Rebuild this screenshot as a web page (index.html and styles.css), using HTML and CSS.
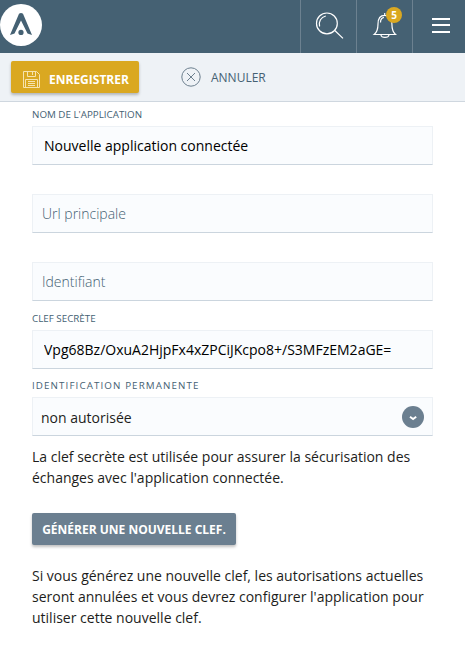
FILE: index.html
```html
<!DOCTYPE html>
<html lang="fr">
<head>
<meta charset="utf-8">
<title>Application connectée</title>
<link rel="stylesheet" href="styles.css">
</head>
<body>
<header class="topbar">
  <svg class="logo" viewBox="0 0 42 42"><circle cx="21" cy="21" r="21" fill="#fff"/><path d="M10 31L19 9.8Q21 8.4 23 9.8L32 31L27.5 29.4L21 16.5L14.5 29.4Z" fill="#456173"/><circle cx="21" cy="28.4" r="2.6" fill="#456173"/></svg>
  <nav class="actions">
    <button class="action" aria-label="Rechercher"><svg viewBox="0 0 56 53" fill="none" stroke="#fff"><circle cx="26.9" cy="23.4" r="10.4" stroke-width="1.2"/><path d="M19.6 26.5C18.4 21.5 21 17 25.8 16M34.8 30.5L43 38.4" stroke-width="1.2"/></svg></button>
    <button class="action" aria-label="Notifications"><svg viewBox="0 0 56 53" fill="none" stroke="#fff" stroke-width="1.2"><path d="M18.2 34.5C21.2 32 22 29 22 24C22 18 24.2 15.3 28.7 15.3C33.2 15.3 35.9 18 35.9 24C35.9 29 36.7 32 39.5 34.5ZM28.7 13V15.3M24.9 35C25.5 38.2 32.4 38.2 33 35M24.5 22.5C24.5 19.5 25.7 17.7 27.9 17.3"/></svg><span class="badge">5</span></button>
    <button class="action" aria-label="Menu"><svg viewBox="0 0 56 53" fill="#fff"><path d="M20 18h18v2H20zM20 24h18v2H20zM20 31h18v2H20z"/></svg></button>
  </nav>
</header>
<div class="toolbar">
  <button class="btn save"><svg viewBox="0 0 17 17" fill="none" stroke="#f6e3ae"><path d="M.5 .5H13.5L16.5 3.5V16.5H.5Z"/><path d="M4.5 .5V5.5H12.5V.5M9.5 1V4M2.5 16V8.5H14.5V16M5 10.5H12M5 12.5H12M5 14.5H12"/></svg><span class="caption">ENREGISTRER</span></button>
  <button class="cancel"><svg viewBox="0 0 20 20" fill="none" stroke="#6c7f8e"><circle cx="10" cy="10" r="9.2"/><path d="M6 6L14 14M14 6L6 14"/></svg>ANNULER</button>
</div>
<main class="form">
  <label class="label" for="nom">NOM DE L'APPLICATION</label>
  <input class="field" id="nom" value="Nouvelle application connectée">
  <input class="field empty" placeholder="Url principale">
  <input class="field empty" placeholder="Identifiant">
  <label class="label" for="clef">CLEF SECRÈTE</label>
  <input class="field" id="clef" value="Vpg68Bz/OxuA2HjpFx4xZPCiJKcpo8+/S3MFzEM2aGE=">
  <div class="label perm">IDENTIFICATION PERMANENTE</div>
  <div class="field select"><span>non autorisée</span><svg viewBox="0 0 22 22"><circle cx="11" cy="11" r="11" fill="#6b7f90"/><path d="M8 10.8L11.1 13L14.2 10.8" fill="none" stroke="#fff" stroke-width="2"/></svg></div>
  <p class="help">La clef secrète est utilisée pour assurer la sécurisation des échanges avec l'application connectée.</p>
  <button class="btn generate">GÉNÉRER UNE NOUVELLE CLEF.</button>
  <p class="note">Si vous générez une nouvelle clef, les autorisations actuelles seront annulées et vous devrez configurer l'application pour utiliser cette nouvelle clef.</p>
</main>
</body>
</html>
```
FILE: styles.css
```css
* { box-sizing: border-box; }
body { margin: 0; background: #fff; color: #1d1d1b; font: 14px/21px "Open Sans", sans-serif; overflow: hidden; }
button { border: 0; padding: 0; background: none; font: inherit; }
svg { display: block; flex: none; }
.topbar { height: 53px; background: #456173; display: flex; justify-content: space-between; align-items: flex-start; }
.logo { width: 42px; height: 42px; margin-top: 4px; }
.actions { display: flex; }
.action { position: relative; width: 56px; height: 53px; border-left: 1px solid #6c8190; }
.action:last-child { width: 53px; }
.action svg { width: 56px; height: 53px; margin-left: -1px; }
.badge { position: absolute; left: 29px; top: 7px; width: 16px; height: 16px; border-radius: 50%; background: #daa821; color: #fff; font: bold 10px/16px "Open Sans", sans-serif; text-align: center; }
.toolbar { height: 49px; background: #eef2f6; border-bottom: 1px solid #cfd7df; display: flex; align-items: flex-start; padding: 8px 11px; }
.btn { height: 32px; border-radius: 2px; color: #fff; font-weight: bold; font-size: 12px; line-height: 32px; box-shadow: 0 2px 3px rgba(0,0,0,.25); white-space: nowrap; }
.save { width: 128px; background: #daa821; display: flex; align-items: center; padding: 5px 0 0 12px; gap: 9px; }
.save svg { width: 17px; height: 17px; }
.caption { line-height: 18px; padding-top: 1px; }
.cancel { display: flex; align-items: center; gap: 10px; height: 32px; margin-left: 42px; color: #456173; font-size: 12px; }
.cancel svg { width: 20px; height: 20px; }
.form { padding: 0 32px; display: flex; flex-direction: column; align-items: flex-start; }
.label { height: 24px; padding-top: 5px; font-size: 9.8px; line-height: 16px; color: #456173; }
.field { width: 401px; height: 39px; background: #fafcfe; border: 1px solid #edf1f5; border-bottom-color: #cbd5de; font: 14px/21px "Open Sans", sans-serif; color: #000; padding: 0 11px; outline: 0; border-radius: 0; }
.empty { margin-top: 29px; padding: 0 9px; }
.empty::placeholder { color: #456173; font-weight: 300; opacity: 1; }
.form .empty + .label { height: 29px; padding-top: 10px; }
.perm { height: 28px; padding-top: 9px; letter-spacing: 1.1px; }
.select { display: flex; justify-content: space-between; align-items: center; padding: 2px 8px 0; color: #1d1d1b; }
.select svg { width: 22px; height: 22px; margin-top: -2px; }
.help { margin: 10px 0 25px; }
.generate { width: 204px; background: #6b7f90; padding-top: 1px; }
.note { margin: 20px 0 0; }
```
